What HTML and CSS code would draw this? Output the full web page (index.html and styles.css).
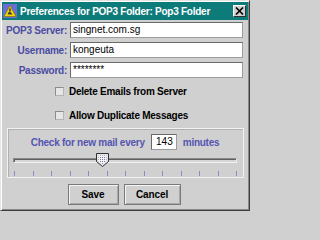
FILE: index.html
```html
<!DOCTYPE html>
<html>
<head>
<meta charset="utf-8">
<link rel="stylesheet" href="styles.css">
</head>
<body>
<div class="window">
  <div class="titlebar">
    <svg class="app-icon" width="14" height="14" viewBox="0 0 14 14">
      <rect x="0" y="0" width="14" height="14" fill="#6d6dd6"/>
      <polygon points="7,1.5 13,12.5 1,12.5" fill="#f0d800" stroke="#7a6a00" stroke-width="0.6"/>
      <path d="M4.5 10.5 L6 7.5 L8 8.5 L9.5 10.5 Z" fill="#3a3a3a"/>
      <rect x="6.2" y="4.5" width="1.6" height="3" fill="#3a3a3a"/>
    </svg>
    <span class="title">Preferences for POP3 Folder: Pop3 Folder</span>
    <div class="close">
      <svg width="9" height="8" viewBox="0 0 9 8">
        <path d="M1 0.5 L8 7.5 M8 0.5 L1 7.5" stroke="#000" stroke-width="1.6"/>
      </svg>
    </div>
  </div>
  <div class="content">
    <div class="form">
      <label class="lbl">POP3 Server:</label>
      <div class="field">singnet.com.sg</div>
      <label class="lbl">Username:</label>
      <div class="field">kongeuta</div>
      <label class="lbl">Password:</label>
      <div class="field pwd">********</div>
    </div>
    <div class="checks">
      <div class="check"><span class="box"></span><span>Delete Emails from Server</span></div>
      <div class="check"><span class="box"></span><span>Allow Duplicate Messages</span></div>
    </div>
    <div class="panel">
      <div class="interval">
        <span>Check for new mail every</span>
        <span class="num">143</span>
        <span>minutes</span>
      </div>
      <div class="slider">
        <div class="track"></div>
        <svg class="thumb" width="13" height="14" viewBox="0 0 13 14">
          <defs>
            <pattern id="dots" width="2" height="2" patternUnits="userSpaceOnUse">
              <rect width="2" height="2" fill="#f4f4f4"/>
              <rect width="1" height="1" fill="#7a7aa8"/>
            </pattern>
          </defs>
          <path d="M0.5 0.5 H12.5 V8.5 L6.5 13.5 L0.5 8.5 Z" fill="#e8e8e8" stroke="#303030"/>
          <path d="M2.5 2.5 H10.5 V8 L6.5 11.2 L2.5 8 Z" fill="url(#dots)"/>
        </svg>
      </div>
      <div class="ticks">
        <i></i><i></i><i></i><i></i><i></i><i></i><i></i><i></i><i></i><i></i><i></i><i></i><i></i>
      </div>
    </div>
    <div class="buttons">
      <div class="btn save">Save</div>
      <div class="btn cancel">Cancel</div>
    </div>
  </div>
</div>
</body>
</html>
```
FILE: styles.css
```css
html, body {
  margin: 0;
  padding: 0;
  background: #d0d0d0;
}
body {
  width: 250px;
  height: 214px;
  overflow: hidden;
  font-family: "Liberation Sans", Arial, sans-serif;
}
.window {
  box-sizing: border-box;
  width: 250px;
  height: 211px;
  border-top: 1px solid #e4e4e4;
  border-left: 1px solid #e4e4e4;
  border-right: 1px solid #3c3c3c;
  border-bottom: 1px solid #3c3c3c;
  box-shadow: inset 1px 1px 0 #ffffff, inset -1px -1px 0 #8a8a8a;
  padding: 1px;
  background: #d0d0d0;
}
.titlebar {
  height: 18px;
  background: #0e7b7b;
  display: flex;
  align-items: center;
  padding-left: 1px;
  padding-right: 2px;
}
.app-icon {
  flex: none;
}
.title {
  color: #fff;
  font-weight: bold;
  font-size: 10px;
  margin-left: 3px;
  white-space: nowrap;
  letter-spacing: -0.25px;
  flex: 1;
}
.close {
  width: 11px;
  height: 10px;
  background: #d0d0d0;
  border-top: 1px solid #fff;
  border-left: 1px solid #fff;
  border-right: 1px solid #303030;
  border-bottom: 1px solid #303030;
  display: flex;
  align-items: center;
  justify-content: center;
}
.content {
  padding-top: 2px;
}
.form {
  display: grid;
  grid-template-columns: 65px 173px;
  column-gap: 3px;
  row-gap: 4px;
  align-items: center;
}
.lbl {
  text-align: right;
  font-weight: bold;
  font-size: 10px;
  color: #4b4ba3;
  letter-spacing: -0.25px;
  white-space: nowrap;
}
.field {
  box-sizing: border-box;
  height: 16px;
  background: #fff;
  border: 1px solid #9c9c9c;
  border-top-color: #6a6a6a;
  border-left-color: #6a6a6a;
  font-size: 10px;
  line-height: 14px;
  padding-left: 2px;
  color: #000;
  white-space: nowrap;
}
.field.pwd {
  line-height: 13px;
}
.checks {
  margin-top: 6px;
  padding-left: 53px;
  display: flex;
  flex-direction: column;
  row-gap: 10px;
}
.check {
  height: 14px;
  display: flex;
  align-items: center;
  font-weight: bold;
  font-size: 10px;
  color: #000;
  letter-spacing: -0.25px;
}
.box {
  box-sizing: border-box;
  width: 9px;
  height: 9px;
  background: #e6e6e6;
  border: 1px solid #b4b4b4;
  border-top-color: #8c8c8c;
  border-left-color: #8c8c8c;
  margin-right: 5px;
}
.panel {
  box-sizing: border-box;
  margin: 6px 4px 0 5px;
  height: 50px;
  border: 1px solid #f2f2f2;
  box-shadow: inset 1px 1px 0 #b0b0b0;
  padding-top: 5px;
}
.interval {
  display: flex;
  justify-content: center;
  align-items: center;
  column-gap: 6px;
  font-weight: bold;
  font-size: 10px;
  color: #5454b0;
  height: 16px;
  letter-spacing: -0.25px;
  padding-right: 1px;
}
.num {
  box-sizing: border-box;
  width: 26px;
  height: 16px;
  background: #fff;
  border: 1px solid #9c9c9c;
  border-top-color: #6a6a6a;
  border-left-color: #6a6a6a;
  color: #000;
  font-weight: normal;
  font-size: 10px;
  letter-spacing: 0;
  line-height: 14px;
  text-align: right;
  padding-right: 3px;
}
.slider {
  position: relative;
  height: 14px;
  margin-top: 3px;
  margin-left: 5px;
  margin-right: 6px;
  display: flex;
  align-items: center;
}
.track {
  box-sizing: border-box;
  width: 100%;
  height: 5px;
  border: 1px solid #8a8a8a;
  border-bottom-color: #f0f0f0;
  border-right-color: #f0f0f0;
  background: #d6d6d6;
  box-shadow: inset 1px 1px 0 #606060;
}
.thumb {
  position: absolute;
  left: 83px;
  top: 0;
}
.ticks {
  display: flex;
  justify-content: space-between;
  margin: 4px 6px 0 6px;
  height: 5px;
}
.ticks i {
  width: 1px;
  height: 5px;
  background: #8c8cc4;
}
.buttons {
  margin-top: 6px;
  display: flex;
  justify-content: center;
  column-gap: 5px;
  padding-right: 2px;
}
.btn {
  box-sizing: border-box;
  height: 21px;
  border: 1px solid #7a7a7a;
  box-shadow: inset 1px 1px 0 #f4f4f4, inset -1px -1px 0 #a8a8a8;
  font-weight: bold;
  font-size: 10px;
  letter-spacing: -0.1px;
  display: flex;
  align-items: center;
  justify-content: center;
  color: #000;
}
.save { width: 51px; }
.cancel { width: 57px; }
```
